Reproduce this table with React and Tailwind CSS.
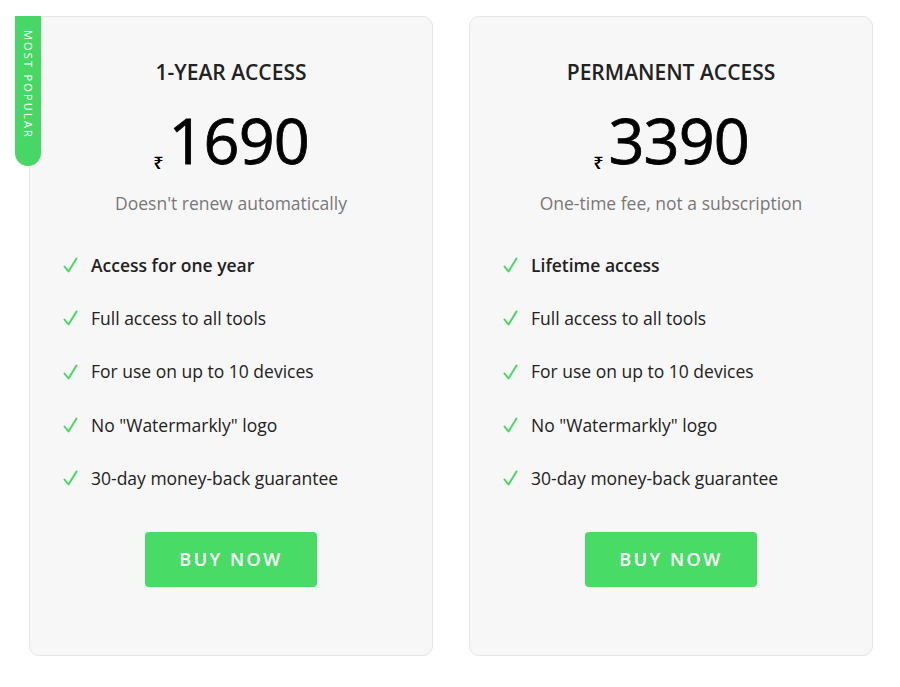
import React from "react";

const plans = [
  {
    title: "1-YEAR ACCESS",
    price: "1690",
    note: "Doesn't renew automatically",
    features: ["Access for one year", "Full access to all tools", "For use on up to 10 devices", 'No "Watermarkly" logo', "30-day money-back guarantee"],
    popular: true,
  },
  {
    title: "PERMANENT ACCESS",
    price: "3390",
    note: "One-time fee, not a subscription",
    features: ["Lifetime access", "Full access to all tools", "For use on up to 10 devices", 'No "Watermarkly" logo', "30-day money-back guarantee"],
  },
];

function Check() {
  return (
    <svg width="15" height="16" viewBox="0 0 15 16" className="shrink-0">
      <path d="M1.5 9.5 L5.5 14.5 L13.5 1.5" fill="none" stroke="#47d764" strokeWidth="2" strokeLinecap="round" strokeLinejoin="round" />
    </svg>
  );
}

function Card({ plan }) {
  return (
    <div className="relative w-[404px] h-[640px] rounded-[10px] border border-[#e6e6e6] bg-[#f7f7f7] flex flex-col items-center">
      {plan.popular && (
        <div className="absolute left-[-15px] top-[-1px] w-[26px] h-[150px] bg-[#47d764] rounded-b-full flex justify-center pt-[14px]">
          <span className="text-white text-[11px] tracking-[2.2px] leading-none [writing-mode:vertical-rl]">MOST POPULAR</span>
        </div>
      )}
      <h2 className="mt-[41px] text-[21px] leading-[28px] font-semibold text-[#222]">{plan.title}</h2>
      <div className="mt-[22px] flex items-end">
        <span className="text-[18px] leading-none mb-[1px] mr-[5px] text-black font-semibold">₹</span>
        <span className="text-[63px] leading-[64px] text-black tracking-[-1px] [-webkit-text-stroke:0.8px_black]">{plan.price}</span>
      </div>
      <p className="mt-[19px] text-[17.5px] leading-[24px] text-[#777]">{plan.note}</p>
      <ul className="self-stretch pl-[33px] mt-[38px] flex flex-col gap-[29.25px]">
        {plan.features.map((f, i) => (
          <li key={f} className="flex items-center h-[24px]">
            <Check />
            <span className={`ml-[13px] text-[17.5px] text-[#222] ${i === 0 ? "font-semibold" : ""}`}>{f}</span>
          </li>
        ))}
      </ul>
      <button className="mt-[42px] w-[172px] h-[55px] rounded-[4px] bg-[#48db65] text-white text-[18px] font-semibold tracking-[2.5px]">
        BUY NOW
      </button>
    </div>
  );
}

export default function App() {
  return (
    <div className="min-h-[687px] bg-white pl-[29px] pt-[16px] flex gap-[36px] font-['Open_Sans','Noto_Sans',sans-serif]">
      {plans.map(p => <Card key={p.title} plan={p} />)}
    </div>
  );
}
